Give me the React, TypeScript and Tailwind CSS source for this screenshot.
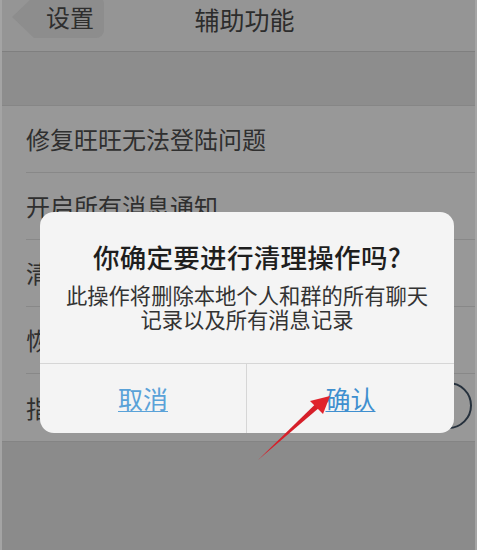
import React from "react";

const rows = ["修复旺旺无法登陆问题", "开启所有消息通知", "清除所有聊天记录", "恢复默认设置", "指纹解锁"];

export default function App() {
  return (
    <div
      className="relative w-[477px] h-[550px] overflow-hidden bg-[#8b8b8b] border-x-2 border-[#a4a4a4]"
      style={{ fontFamily: '"Noto Sans CJK SC", "Noto Sans", sans-serif' }}
    >
      {/* nav bar */}
      <div className="h-[52px] bg-[#959595] border-b border-[#7f7f7f] grid grid-cols-[1fr_auto_1fr] items-start">
        <div className="flex">
          <div className="ml-[10px] mt-[-4px] h-[42px] w-[92px] bg-[#8d8d8d] rounded-r-[8px] [clip-path:polygon(22px_0,100%_0,100%_100%,22px_100%,0_50%)] flex items-center justify-end pr-[10px]">
            <span className="text-[24px] leading-none text-[#2e2e2e]">设置</span>
          </div>
        </div>
        <div className="pl-[12px] h-[38px] flex items-center text-[25px] leading-none text-[#2c2c2c]">辅助功能</div>
        <div />
      </div>

      {/* grey gap */}
      <div className="h-[54px] bg-[#8d8d8d] border-b border-[#868686]" />

      {/* list */}
      <div className="bg-[#989898]">
        {rows.map((r, i) => (
          <div key={r} className="pl-[24px]">
            <div
              className={
                "h-[67px] flex items-center justify-between pr-[3px] " +
                (i < rows.length - 1 ? "border-b border-[#888888]" : "")
              }
            >
              <span className="text-[24px] leading-none text-[#2f2f2f]">{r}</span>
              {i === rows.length - 1 && (
                <div className="w-[76px] h-[47px] rounded-full border-[2.5px] border-[#25303c] mb-[4px]" />
              )}
            </div>
          </div>
        ))}
      </div>
      <div className="h-px bg-[#848484]" />

      {/* dialog */}
      <div className="absolute left-[38px] top-[212px] w-[414px] h-[221px] bg-[#f4f4f4] rounded-[14px] flex flex-col overflow-hidden">
        <div className="flex-1 flex flex-col items-center pt-[29px]">
          <div className="text-[26.5px] leading-[32px] font-medium text-[#1e1e1e] tracking-[0.3px]">你确定要进行清理操作吗?</div>
          <div className="mt-[10px] text-[21.3px] leading-[24px] text-[#333333] text-center">
            <div>此操作将删除本地个人和群的所有聊天</div>
            <div>记录以及所有消息记录</div>
          </div>
        </div>
        <div className="h-[70px] border-t border-[#d6d6d6] grid grid-cols-2">
          <div className="flex items-center justify-center border-r border-[#d6d6d6]">
            <span className="text-[25px] leading-none text-[#5aa2d8] underline underline-offset-[2px] decoration-1">取消</span>
          </div>
          <div className="flex items-center justify-center">
            <span className="text-[25px] leading-none text-[#3f8fcf] underline underline-offset-[2px] decoration-1">确认</span>
          </div>
        </div>
      </div>

      {/* red arrow */}
      <svg className="absolute left-0 top-0" width="477" height="550" viewBox="0 0 477 550">
        <polygon points="256,460 314.5,403 318,407" fill="#d61f29" />
        <polygon points="328,396 308,401 321,414" fill="#e0232c" />
      </svg>
    </div>
  );
}
